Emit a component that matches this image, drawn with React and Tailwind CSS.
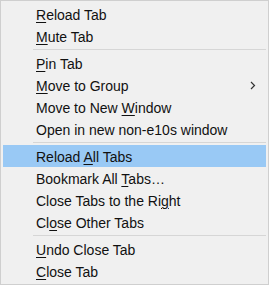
import React from "react";

const U = ({ children }) => (
  <span className="underline underline-offset-[2px] decoration-[1px]">{children}</span>
);

function Item({ children, active, arrow }) {
  return (
    <div
      className={`relative h-[22px] flex items-center pl-[33px] pt-[2px] mx-[2px] ${
        active ? "bg-[#99c9f5]" : ""
      }`}
    >
      <span className="whitespace-nowrap">{children}</span>
      {arrow && (
        <svg
          className="absolute right-[10px] top-[7px]"
          width="6"
          height="9"
          viewBox="0 0 6 9"
          fill="none"
        >
          <path d="M1 1l3.5 3.5L1 8" stroke="#333" strokeWidth="1.2" />
        </svg>
      )}
    </div>
  );
}

function Sep() {
  return (
    <div className="h-[5px] flex items-center pl-[32px] pr-[2px]">
      <div className="h-px w-full bg-[#d6d6d6]" />
    </div>
  );
}

export default function App() {
  return (
    <div
      className="w-[269px] h-[285px] bg-[#f0f0f0] border border-[#cfcfcf] pt-[2px] text-[14px] text-[#111] leading-none"
      style={{ fontFamily: '"Liberation Sans", Arial, sans-serif' }}
    >
      <Item><U>R</U>eload Tab</Item>
      <Item><U>M</U>ute Tab</Item>
      <Sep />
      <Item><U>P</U>in Tab</Item>
      <Item arrow><U>M</U>ove to Group</Item>
      <Item>Move to New <U>W</U>indow</Item>
      <Item>Open in new non-e10s window</Item>
      <Sep />
      <Item active>Reload <U>A</U>ll Tabs</Item>
      <Item>Bookmark All <U>T</U>abs…</Item>
      <Item>Close Tabs to the Ri<U>g</U>ht</Item>
      <Item>Cl<U>o</U>se Other Tabs</Item>
      <Sep />
      <Item><U>U</U>ndo Close Tab</Item>
      <Item><U>C</U>lose Tab</Item>
    </div>
  );
}
